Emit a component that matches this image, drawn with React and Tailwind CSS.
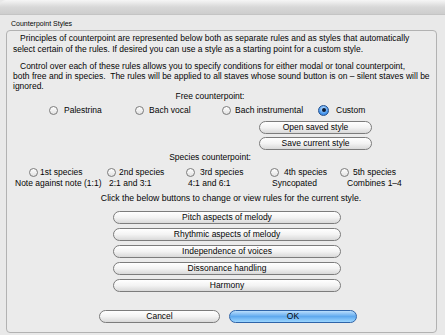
import React from "react";

function Radio({ checked }) {
  if (checked) {
    return (
      <span className="inline-flex items-center justify-center w-[11px] h-[11px] rounded-full border border-[#24518f] bg-[radial-gradient(circle_at_50%_35%,#cfe8ff_0%,#4b9af0_60%,#2a6fc9_100%)]">
        <span className="w-[4px] h-[4px] rounded-full bg-[#0b1a33]" />
      </span>
    );
  }
  return (
    <span className="inline-block w-[9px] h-[9px] rounded-full border border-[#7b7b7b] bg-gradient-to-b from-white to-[#e2e2e2]" />
  );
}

function Pill({ children, className }) {
  return (
    <div
      className={
        "flex items-center justify-center h-[13px] rounded-full border border-[#7c7c7c] bg-gradient-to-b from-white via-[#f3f3f3] to-[#d9d9d9] text-[8.5px] leading-none " +
        className
      }
    >
      {children}
    </div>
  );
}

export default function App() {
  return (
    <div className="w-[445px] h-[335px] overflow-hidden bg-[#e9e9e9] text-[#050505] font-['Liberation_Sans',Arial,sans-serif]">
      <div className="h-[15px] rounded-tl-[6px] bg-gradient-to-b from-[#f6f6f6] via-[#d8d8d8] to-[#cdcdcd] border-b border-[#c4c4c4]" />

      <div className="h-[15px] pt-[4px] pl-[11px] text-[7px] leading-[10px]">
        Counterpoint Styles
      </div>

      <div className="ml-[6px] w-[431px] h-[303px] border border-[#b2b2b2] rounded-[4px] bg-[#ebebeb]">
        <p className="pt-[1.5px] pl-[6px] text-[8.5px] leading-[11px] indent-[7px] whitespace-nowrap">
          Principles of counterpoint are represented below both as separate rules and as styles that automatically
          <br />
          select certain of the rules. If desired you can use a style as a starting point for a custom style.
        </p>

        <p className="mt-[6.5px] pl-[6px] text-[8.5px] leading-[10px] indent-[7px] whitespace-nowrap">
          Control over each of these rules allows you to specify conditions for either modal or tonal counterpoint,
          <br />
          both free and in species.&nbsp; The rules will be applied to all staves whose sound button is on – silent staves will be
          <br />
          ignored.
        </p>

        <div className="h-[10px] pr-[23px] text-center text-[8.5px] leading-[10px]">
          Free counterpoint:
        </div>

        <div className="mt-[4px] h-[10px] flex items-center pl-[42px] text-[8.5px] leading-[10px]">
          <div className="w-[86px] flex items-center gap-[6px]">
            <Radio />
            <span>Palestrina</span>
          </div>
          <div className="w-[87px] flex items-center gap-[5px]">
            <Radio />
            <span>Bach vocal</span>
          </div>
          <div className="w-[96px] flex items-center gap-[4px]">
            <Radio />
            <span>Bach instrumental</span>
          </div>
          <div className="flex items-center gap-[7px]">
            <Radio checked />
            <span>Custom</span>
          </div>
        </div>

        <Pill className="mt-[6px] ml-[252px] w-[113px]">Open saved style</Pill>
        <Pill className="mt-[3px] ml-[252px] w-[113px]">Save current style</Pill>

        <div className="mt-[2px] h-[10px] pr-[23px] text-center text-[8.5px] leading-[10px]">
          Species counterpoint:
        </div>

        <div className="mt-[5px] h-[10px] flex items-center pl-[22px] text-[8.5px] leading-[10px] whitespace-nowrap">
          <div className="w-[78px] flex items-center gap-[2px]">
            <Radio />
            <span>1st species</span>
          </div>
          <div className="w-[79px] flex items-center gap-[3px]">
            <Radio />
            <span>2nd species</span>
          </div>
          <div className="w-[84px] flex items-center gap-[5px]">
            <Radio />
            <span>3rd species</span>
          </div>
          <div className="w-[70px] flex items-center gap-[5px]">
            <Radio />
            <span>4th species</span>
          </div>
          <div className="flex items-center gap-[4px]">
            <Radio />
            <span>5th species</span>
          </div>
        </div>

        <div className="mt-[1px] h-[10px] flex pl-[8px] text-[8.5px] leading-[10px] whitespace-nowrap">
          <div className="w-[94px]">Note against note (1:1)</div>
          <div className="w-[79px]">2:1 and 3:1</div>
          <div className="w-[84px]">4:1 and 6:1</div>
          <div className="w-[75px]">Syncopated</div>
          <div>Combines 1–4</div>
        </div>

        <div className="mt-[5px] h-[10px] pl-[19px] text-center text-[8.7px] leading-[10px] whitespace-nowrap">
          Click the below buttons to change or view rules for the current style.
        </div>

        <div className="mt-[8px] ml-[106px] w-[228px] flex flex-col gap-[4px]">
          <Pill>Pitch aspects of melody</Pill>
          <Pill>Rhythmic aspects of melody</Pill>
          <Pill>Independence of voices</Pill>
          <Pill>Dissonance handling</Pill>
          <Pill>Harmony</Pill>
        </div>

        <div className="mt-[18px] ml-[92px] flex gap-[9px]">
          <Pill className="w-[121px]">Cancel</Pill>
          <div className="flex items-center justify-center w-[128px] h-[13px] rounded-full border border-[#2f64a8] bg-gradient-to-b from-[#b9defc] via-[#5fa9ee] to-[#9bd6ff] text-[8.5px] leading-none">
            OK
          </div>
        </div>
      </div>
    </div>
  );
}
